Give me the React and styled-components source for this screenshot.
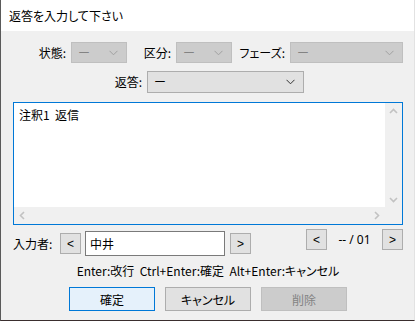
import React from 'react';
import styled, { createGlobalStyle } from 'styled-components';

const Global = createGlobalStyle`
  html, body { margin: 0; padding: 0; background: #f0f0f0; }
  body { font-family: "Noto Sans CJK JP", "Noto Sans", sans-serif; }
  * { box-sizing: border-box; }
`;

const Window = styled.div`
  width: 415px;
  height: 321px;
  display: flex;
  flex-direction: column;
  background: #f0f0f0;
  border-left: 1px solid #5a5a5a;
  border-right: 1px solid #e2e2e2;
  border-bottom: 1px solid #3a2e2e;
  font-size: 12px;
  color: #000;
`;

const TitleBar = styled.div`
  height: 31px;
  background: #fff;
  display: flex;
  align-items: center;
  padding-left: 8px;
  font-size: 12px;
  font-feature-settings: "palt";
`;

const Body = styled.div`
  flex: 1;
  display: flex;
  flex-direction: column;
  padding: 11px 11px 0 12px;
`;

const Row = styled.div`
  display: flex;
  align-items: center;
  margin-top: ${p => p.$mt || 0}px;
`;

const Field = styled.div`
  display: flex;
  align-items: center;
  gap: 5px;
`;

const Label = styled.span`
  width: ${p => p.$w}px;
  text-align: ${p => p.$align || 'right'};
  white-space: nowrap;
  line-height: 14px;
  font-feature-settings: "palt";
`;

const Combo = styled.div`
  width: ${p => p.$w}px;
  height: ${p => p.$h || 21}px;
  display: flex;
  align-items: center;
  justify-content: space-between;
  padding: 0 8px 0 6px;
  background: ${p => (p.$disabled ? '#cccccc' : '#e1e1e1')};
  border: 1px solid ${p => (p.$disabled ? '#bfbfbf' : '#adadad')};
  color: ${p => (p.$disabled ? '#838383' : '#000')};
  font-size: 12px;
  line-height: 14px;
`;

const Chevron = ({ color }) => (
  <svg width="9" height="6" viewBox="0 0 9 6">
    <path d="M0.5 0.8 L4.5 4.8 L8.5 0.8" fill="none" stroke={color} strokeWidth="1" />
  </svg>
);

const TextBox = styled.div`
  margin-top: 9px;
  height: 123px;
  border: 1px solid #0078d7;
  display: grid;
  grid-template-columns: 1fr 17px;
  grid-template-rows: 1fr 17px;
  background: #fff;
`;

const TextContent = styled.div`
  padding: 3px 5px;
  font-size: 12px;
  line-height: 17px;
  background: #fff;
  white-space: pre;
`;

const ScrollV = styled.div`
  background: #f0f0f0;
  display: flex;
  flex-direction: column;
  justify-content: space-between;
  align-items: center;
  padding: 5px 0 4px;
`;

const ScrollH = styled.div`
  background: #f0f0f0;
  display: flex;
  justify-content: space-between;
  align-items: center;
  padding: 0 5px;
`;

const Corner = styled.div`
  background: #f0f0f0;
`;

const Arrow = ({ dir }) => {
  const paths = {
    up: 'M1 5 L4.5 1.5 L8 5',
    down: 'M1 1 L4.5 4.5 L8 1',
    left: 'M5 1 L1.5 4.5 L5 8',
    right: 'M1 1 L4.5 4.5 L1 8',
  };
  const vertical = dir === 'up' || dir === 'down';
  return (
    <svg width={vertical ? 9 : 6} height={vertical ? 6 : 9} viewBox={vertical ? '0 0 9 6' : '0 0 6 9'}>
      <path d={paths[dir]} fill="none" stroke="#c2c2c2" strokeWidth="1.6" />
    </svg>
  );
};

const BottomRow = styled.div`
  display: flex;
  align-items: flex-start;
  margin-top: 4px;
  height: 27px;
`;

const Group = styled.div`
  display: flex;
  align-items: center;
  margin-top: ${p => p.$mt || 0}px;
  margin-left: ${p => (p.$right ? 'auto' : '0')};
`;

const SmallButton = styled.div`
  width: 21px;
  height: 21px;
  display: flex;
  align-items: center;
  justify-content: center;
  background: #e1e1e1;
  border: 1px solid #adadad;
  font-family: "Liberation Sans", sans-serif;
  font-size: 12px;
  line-height: 1;
  margin-left: ${p => p.$ml || 0}px;
`;

const Input = styled.div`
  width: 140px;
  height: 25px;
  background: #fff;
  border: 1px solid #7a7a7a;
  display: flex;
  align-items: center;
  padding-left: 4px;
  font-size: 12px;
  margin-left: ${p => p.$ml || 0}px;
`;

const Counter = styled.span`
  width: 55px;
  text-align: center;
  font-size: 12px;
  line-height: 14px;
  font-family: "Noto Sans", sans-serif;
`;

const Hint = styled.div`
  margin-top: 8px;
  height: 14px;
  line-height: 14px;
  text-align: center;
  font-size: 12px;
  white-space: pre;
  font-feature-settings: "palt";
`;

const ButtonRow = styled.div`
  margin-top: 9px;
  display: flex;
  justify-content: center;
  gap: 10px;
`;

const Button = styled.div`
  width: 86px;
  height: 24px;
  display: flex;
  align-items: center;
  justify-content: center;
  font-size: 12px;
  background: ${p => (p.$primary ? '#e5f1fb' : p.$disabled ? '#cccccc' : '#e1e1e1')};
  border: 1px solid ${p => (p.$primary ? '#0078d7' : p.$disabled ? '#bfbfbf' : '#adadad')};
  color: ${p => (p.$disabled ? '#838383' : '#000')};
  font-feature-settings: "palt";
`;

export default function App() {
  return (
    <>
      <Global />
      <Window>
        <TitleBar>返答を入力して下さい</TitleBar>
        <Body>
          <Row>
            <Field>
              <Label $w={53}>状態:</Label>
              <Combo $w={56} $disabled>
                <span>ー</span>
                <Chevron color="#a0a0a0" />
              </Combo>
            </Field>
            <Field>
              <Label $w={44}>区分:</Label>
              <Combo $w={56} $disabled>
                <span>ー</span>
                <Chevron color="#a0a0a0" />
              </Combo>
            </Field>
            <Field>
              <Label $w={53}>フェーズ:</Label>
              <Combo $w={113} $disabled>
                <span>ー</span>
                <Chevron color="#a0a0a0" />
              </Combo>
            </Field>
          </Row>
          <Row $mt={8}>
            <Field>
              <Label $w={129}>返答:</Label>
              <Combo $w={157} $h={22}>
                <span>ー</span>
                <Chevron color="#333" />
              </Combo>
            </Field>
          </Row>
          <TextBox>
            <TextContent>{'注釈1  返信'}</TextContent>
            <ScrollV>
              <Arrow dir="up" />
              <Arrow dir="down" />
            </ScrollV>
            <ScrollH>
              <Arrow dir="left" />
              <Arrow dir="right" />
            </ScrollH>
            <Corner />
          </TextBox>
          <BottomRow>
            <Group $mt={2}>
              <Label $w={42} $align="left">入力者:</Label>
              <SmallButton $ml={5}>&lt;</SmallButton>
              <Input $ml={4}>中井</Input>
              <SmallButton $ml={5}>&gt;</SmallButton>
            </Group>
            <Group $right>
              <SmallButton>&lt;</SmallButton>
              <Counter>-- / 01</Counter>
              <SmallButton>&gt;</SmallButton>
            </Group>
          </BottomRow>
          <Hint>{'Enter:改行  Ctrl+Enter:確定  Alt+Enter:キャンセル'}</Hint>
          <ButtonRow>
            <Button $primary>確定</Button>
            <Button>キャンセル</Button>
            <Button $disabled>削除</Button>
          </ButtonRow>
        </Body>
      </Window>
    </>
  );
}
